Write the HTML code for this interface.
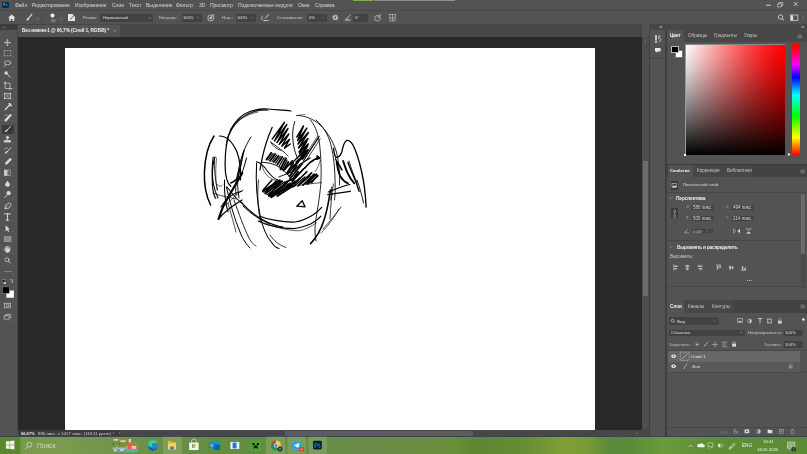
<!DOCTYPE html>
<html><head><meta charset="utf-8">
<style>
*{margin:0;padding:0;box-sizing:border-box}
html,body{width:807px;height:454px;overflow:hidden;background:#535353;font-family:"Liberation Sans",sans-serif;color:#ddd;position:relative}
.a{position:absolute}
.t{position:absolute;will-change:transform;white-space:nowrap;font-size:5px;line-height:6px;color:#d8d8d8}
svg{overflow:visible}
</style></head><body>
<!-- ===== MENU BAR ===== -->
<div class="a" style="left:0;top:0;width:807px;height:10px;background:#535353"></div>
<div class="a" style="left:353.4px;top:0;width:20.1px;height:1.2px;background:#7cb342"></div><div class="a" style="left:373.5px;top:0;width:81.5px;height:1.2px;background:#8e8e8e"></div>
<div class="a" style="left:2.1px;top:2.1px;width:6.7px;height:5.9px;background:#0b2a4a;border-radius:0.8px"></div>
<div class="t" style="left:3.2px;top:2.6px;font-size:3.6px;line-height:4.5px;color:#4cb0f0;font-weight:700">Ps</div>
<div class="t" style="left:15px;top:2px">Файл</div>
<div class="t" style="left:32px;top:2px">Редактирование</div>
<div class="t" style="left:74.6px;top:2px">Изображение</div>
<div class="t" style="left:112px;top:2px">Слои</div>
<div class="t" style="left:128.5px;top:2px">Текст</div>
<div class="t" style="left:146px;top:2px">Выделение</div>
<div class="t" style="left:176.4px;top:2px">Фильтр</div>
<div class="t" style="left:199px;top:2px">3D</div>
<div class="t" style="left:210.2px;top:2px">Просмотр</div>
<div class="t" style="left:238px;top:2px">Подключаемые модули</div>
<div class="t" style="left:298px;top:2px">Окно</div>
<div class="t" style="left:315.4px;top:2px">Справка</div>
<svg class="a" style="left:760px;top:0" width="47" height="10" viewBox="0 0 47 10">
 <path d="M6 5.2h5" stroke="#ddd" stroke-width="0.9"/>
 <path d="M17.5 3.8h4v3h-4z M18.8 3.8v-1.3h4v3h-1.2" stroke="#ccc" stroke-width="0.7" fill="none"/>
 <path d="M33.8 2.2l3.8 3.8M37.6 2.2l-3.8 3.8" stroke="#ddd" stroke-width="0.8"/>
</svg>
<div class="a" style="left:0;top:10px;width:807px;height:1px;background:#4a4a4a"></div>
<!-- ===== OPTIONS BAR ===== -->
<div class="a" style="left:0;top:11px;width:807px;height:13px;background:#535353"></div>
<svg class="a" style="left:0;top:11px" width="400" height="13" viewBox="0 0 400 13">
 <!-- home -->
 <path d="M8.2 6.8L11.7 3.4L15.3 6.8H14.2V10H12.6V8H10.8V10H9.3V6.8Z" fill="#e6e6e6"/>
 <path d="M21.8 1.5v10M41 1.5v10" stroke="#4a4a4a" stroke-width="0.6"/>
 <!-- brush -->
 <path d="M31.9 3.2L28.3 7.6" stroke="#e6e6e6" stroke-width="1.05" stroke-linecap="round"/>
 <path d="M28.6 7.1c-1.2 0.2-1.9 0.9-2.1 2.5c1.4-0.1 2.3-0.7 2.7-1.8z" fill="#e6e6e6"/>
 <path d="M36.4 7.3l1.1 0.8l1.1-0.8" stroke="#aaa" stroke-width="0.5" fill="none"/>
 <!-- brush dot + 30 -->
 <circle cx="52.5" cy="4.5" r="2" fill="#f2f2f2"/>
 <path d="M60 7.3l1.1 0.8l1.1-0.8" stroke="#aaa" stroke-width="0.5" fill="none"/>
 <!-- brush panel -->
 <path d="M68 3h4.5l2.5 2.5V10H68z" fill="#e4e4e4"/>
 <path d="M74.6 3.8L70.2 8.6" stroke="#3a3a3a" stroke-width="0.8"/>
 <!-- pressure opacity icon -->
 <circle cx="210.8" cy="7" r="3" stroke="#ccc" stroke-width="0.8" fill="none"/>
 <circle cx="210.8" cy="7" r="1.2" fill="#ccc"/>
 <path d="M214.3 3L210.8 6.8" stroke="#ddd" stroke-width="0.8"/>
 <!-- airbrush -->
 <path d="M262.5 9.2a3 3 0 0 1 0.5-4.5" stroke="#ccc" stroke-width="0.8" fill="none"/>
 <path d="M263.5 9.5h5M269 3.2L265 7.5" stroke="#ddd" stroke-width="0.8"/>
 <path d="M266 4.5l1 1" stroke="#ddd" stroke-width="0.6"/>
 <!-- gear -->
 <circle cx="335.3" cy="6.5" r="2.2" stroke="#e6e6e6" stroke-width="1.3" fill="none" stroke-dasharray="1 0.7"/>
 <circle cx="335.3" cy="6.5" r="1.5" stroke="#e6e6e6" stroke-width="0.7" fill="none"/>
 <circle cx="338.5" cy="9.8" r="0.4" fill="#ccc"/>
 <!-- angle -->
 <path d="M345 9.2h5.6M345 9.2L350.5 3.8M348 9.2a3 3 0 0 0-0.8-2" stroke="#ddd" stroke-width="0.7" fill="none"/>
 <!-- pressure size -->
 <circle cx="377.5" cy="7.2" r="2.8" stroke="#bbb" stroke-width="0.8" fill="none"/>
 <path d="M381 3.2L377.5 7" stroke="#ddd" stroke-width="0.8"/>
 <!-- symmetry -->
 <path d="M389 3.5h7M389.5 3.5l0.5 6.5h5l0.5-6.5M392.5 3.5v6.5M390 6.8h5" stroke="#bbb" stroke-width="0.7" fill="none"/>
</svg>
<div class="t" style="left:50.8px;top:18.3px;font-size:4px;line-height:5px;color:#bbb">30</div>
<div class="t" style="font-size:4.2px;left:83px;top:15px;color:#c8c8c8">Режим:</div>
<div class="a" style="left:100px;top:14.2px;width:53px;height:7.5px;background:#424242"></div>
<div class="t" style="font-size:4.15px;left:103px;top:15px;color:#e0e0e0">Нормальный</div>
<svg class="a" style="left:148px;top:16px" width="4" height="4"><path d="M0.8 1.5l1.2 1l1.2-1" stroke="#bbb" stroke-width="0.5" fill="none"/></svg>
<div class="t" style="font-size:4.2px;left:159px;top:15px;color:#c8c8c8">Непрозр.:</div>
<div class="a" style="left:181.5px;top:14.2px;width:14.5px;height:7.5px;background:#424242"></div>
<div class="a" style="left:196.3px;top:14.2px;width:5.7px;height:7.5px;background:#424242"></div>
<div class="t" style="font-size:4.0px;left:183px;top:15px;color:#e0e0e0">100%</div>
<div class="t" style="font-size:4.4px;left:222px;top:15px;color:#c8c8c8">Наж.:</div>
<div class="a" style="left:235.5px;top:14.2px;width:14.5px;height:7.5px;background:#424242"></div>
<div class="a" style="left:250.3px;top:14.2px;width:5.7px;height:7.5px;background:#424242"></div>
<div class="t" style="font-size:4.0px;left:237px;top:15px;color:#e0e0e0">100%</div>
<div class="t" style="font-size:4.1px;left:277.3px;top:15px;color:#c8c8c8">Сглаживание:</div>
<div class="a" style="left:307px;top:14.2px;width:14px;height:7.5px;background:#424242"></div>
<div class="a" style="left:321.3px;top:14.2px;width:5.7px;height:7.5px;background:#424242"></div>
<div class="t" style="font-size:4.2px;left:309px;top:15px;color:#e0e0e0">0%</div>
<div class="a" style="left:353px;top:14.2px;width:14.6px;height:7.5px;background:#424242"></div>
<div class="t" style="font-size:4.2px;left:355px;top:15px;color:#e0e0e0">0°</div>
<svg class="a" style="left:195px;top:14px" width="60" height="8"><path d="M2.3 3.5l0.9 0.7l0.9-0.7M56.3 3.5l0.9 0.7l0.9-0.7" stroke="#aaa" stroke-width="0.5" fill="none"/></svg>
<svg class="a" style="left:320px;top:14px" width="8" height="8"><path d="M2.3 3.5l0.9 0.7l0.9-0.7" stroke="#aaa" stroke-width="0.5" fill="none"/></svg>
<svg class="a" style="left:770px;top:11px" width="37" height="13" viewBox="0 0 37 13">
 <circle cx="10.6" cy="6" r="2.2" stroke="#e0e0e0" stroke-width="0.8" fill="none"/>
 <path d="M12.2 7.6l1.8 1.8" stroke="#e0e0e0" stroke-width="0.9"/>
 <rect x="20.6" y="4" width="7.2" height="5.6" stroke="#ddd" stroke-width="0.7" fill="none"/>
 <rect x="21" y="4.4" width="2.2" height="4.8" fill="#ddd"/>
 <path d="M32 6.5l0.9 0.7l0.9-0.7" stroke="#aaa" stroke-width="0.5" fill="none"/>
</svg>

<!-- ===== TOOLBAR ===== -->
<div class="a" style="left:0;top:24px;width:17px;height:6px;background:#3c3c3c"></div>
<svg class="a" style="left:2px;top:25.5px" width="4" height="3"><path d="M0.5 0.5l1 1l-1 1M2 0.5l1 1l-1 1" stroke="#bbb" stroke-width="0.4" fill="none"/></svg>
<div class="a" style="left:0;top:30px;width:17px;height:400px;background:#535353"></div>
<div class="a" style="left:17px;top:24px;width:1px;height:406px;background:#454545"></div>
<div class="a" style="left:1.7px;top:125px;width:12.6px;height:8.6px;background:#383838"></div>
<svg class="a" style="left:0;top:30px" width="17" height="300" viewBox="0 30 17 300"><defs><linearGradient id="gr" x1="0" x2="1"><stop offset="0" stop-color="#fff"/><stop offset="1" stop-color="#222"/></linearGradient></defs>
<g stroke="#d8d8d8" stroke-width="0.7" fill="none" stroke-linecap="round">
 <!-- move -->
 <path d="M7.4 39.6v6M4.4 42.6h6"/>
 <path d="M6.6 40.4l0.8-0.8l0.8 0.8M6.6 44.8l0.8 0.8l0.8-0.8M5.2 41.8l-0.8 0.8l0.8 0.8M9.6 41.8l0.8 0.8l-0.8 0.8" stroke-width="0.5"/>
 <!-- marquee -->
 <path d="M4.3 50.6h1.6M7 50.6h1.6M9.6 50.6h1.2M4.3 55.8h1.6M7 55.8h1.6M9.6 55.8h1.2M4.3 50.6v1.4M4.3 53v1.2M4.3 55v0.8M10.8 50.6v1.4M10.8 53v1.2M10.8 55v0.8" stroke-width="0.6" stroke-linecap="butt"/>
 <!-- lasso -->
 <ellipse cx="7.6" cy="62.8" rx="3.2" ry="2"/>
 <path d="M5.4 64.6l-0.6 1.8"/>
 <!-- quick select -->
 <path d="M4.6 71.5h3v3h-3z" fill="#d8d8d8" stroke="none"/>
 <path d="M7.2 74l3 3" stroke-width="1"/>
 <!-- crop -->
 <path d="M5.2 81.5v7h6.5M3.8 83.2h6.1v6.6"/>
 <!-- frame -->
 <rect x="4.3" y="93.3" width="6.4" height="5.4"/>
 <path d="M4.3 93.3l6.4 5.4M10.7 93.3l-6.4 5.4" stroke-width="0.5"/>
 <!-- eyedropper -->
 <path d="M10.3 104.3L5.5 109.3" stroke-width="1.3"/><path d="M9.2 103.6l2 2" stroke-width="1.5"/><path d="M5.5 109.3l-0.9 0.9" stroke-width="0.6"/>
 <!-- healing -->
 <path d="M10.4 115.2L5.6 120.4" stroke-width="2.4"/>
 <path d="M4.8 115.5a2 2 0 0 1 2.5-0.5" stroke-width="0.5"/>
 <!-- brush -->
 <path d="M10.6 126.2L7 130.3" stroke-width="0.9"/>
 <path d="M7 130c-1.2 0.2-1.8 0.8-2 1.8c1.2 0 1.8-0.5 2.2-1.2z" fill="#d8d8d8"/>
 <!-- stamp -->
 <circle cx="7.5" cy="137.5" r="1.2" fill="#d8d8d8"/>
 <path d="M7.5 138.5v1.5M4.5 140.5h6v1.6h-6z" fill="#d8d8d8"/>
 <!-- history brush -->
 <path d="M10.8 147.8L7 152" stroke-width="1"/><path d="M7 151.5c-1.1 0.2-1.7 0.8-1.9 1.8c1.1 0 1.7-0.5 2.1-1.2z" fill="#d8d8d8"/>
 <path d="M4 149.5a3 3 0 0 1 3.5-1.5" stroke-width="0.6"/>
 <!-- eraser -->
 <path d="M10.3 159.3L6.3 163.3" stroke-width="2.6"/>
 <!-- gradient -->
 <rect x="4.5" y="170" width="6.2" height="5.5" stroke-width="0.5" fill="url(#gr)"/>
 <!-- blur drop -->
 <path d="M7.5 180.8c-1.8 2.2-2.4 3.2-2.4 4c0 1.3 1.1 2 2.4 2s2.4-0.7 2.4-2c0-0.8-0.6-1.8-2.4-4z" fill="#d8d8d8" stroke="none"/>
 <!-- dodge -->
 <circle cx="8.6" cy="193.2" r="2.1" fill="#d8d8d8" stroke="none"/>
 <path d="M7.3 194.8L4.6 197.6" stroke-width="0.8"/>
 <!-- pen -->
 <path d="M5 208.5l1-3.8l3.5-2l1.6 1.6l-2 3.5z" stroke-width="0.8"/><path d="M5 208.5l2.3-2.3" stroke-width="0.5"/>
 <!-- type -->
 <path d="M4.6 213.9h5.8M7.5 213.9v6.3M6.2 220.2h2.6" stroke-width="1"/>
 <!-- path select -->
 <path d="M5.6 225.2v6.2l1.6-1.5l1.2 2.3l0.8-0.4l-1.2-2.2h2z" fill="#d8d8d8" stroke="none"/>
 <!-- rectangle -->
 <rect x="4.2" y="236.8" width="6.8" height="4.8" fill="#8a8a8a" stroke="#bbb" stroke-width="0.5"/>
 <!-- hand -->
 <path d="M5 249.5c0-1.2 0.5-2.2 1-2.6v1.8M6.4 246.5v2M7.6 246.2v2.2M8.8 246.5v2M10 247.2c0 2.2 0 4.5-2.4 5h-1.2c-1.2-0.5-1.8-1.6-2.2-2.6" stroke-width="0.7"/>
 <path d="M5 248.5h5v2.5l-1.5 1.4h-2z" fill="#d8d8d8" stroke="none"/>
 <!-- zoom -->
 <circle cx="7" cy="259.8" r="2" stroke-width="0.7"/>
 <path d="M8.4 261.3l1.8 1.8" stroke-width="0.9"/>
 <!-- more -->
 <circle cx="5.2" cy="271.5" r="0.55" fill="#d8d8d8" stroke="none"/>
 <circle cx="8" cy="271.5" r="0.55" fill="#d8d8d8" stroke="none"/>
 <circle cx="10.8" cy="271.5" r="0.55" fill="#d8d8d8" stroke="none"/>
 <!-- mini swatches + swap -->
 <rect x="2.3" y="279.8" width="2.6" height="2.6" fill="#111" stroke="#ccc" stroke-width="0.3"/>
 <path d="M3.8 282.2h2v1.8h-2z" fill="#ddd" stroke="none"/>
 <path d="M10.2 279.8h2.2v2.4" stroke-width="0.6"/>
 <path d="M13.4 282.5h-2" stroke-width="0.2"/>
 <!-- quick mask -->
 <rect x="4.3" y="303.2" width="6.4" height="4.6" stroke-width="0.6"/>
 <circle cx="7.5" cy="305.5" r="1.4" stroke-width="0.5"/>
 <!-- screen mode -->
 <path d="M4.2 316v3.2h5v-3.2z M5.8 316v-1.6h5v3.2h-1.5" stroke-width="0.6"/>
</g>
<rect x="6.2" y="290.4" width="7.8" height="7.5" fill="#fff" stroke="#777" stroke-width="0.3"/>
<rect x="2.6" y="286.9" width="6.7" height="6.4" fill="#000" stroke="#999" stroke-width="0.4"/>
<!-- tiny corner triangles -->
<g fill="#a8a8a8">
 <path d="M12.2 46.3h1v-1z M12.2 57h1v-1z M12.2 67.2h1v-1z M12.2 78h1v-1z M12.2 89h1v-1z M12.2 99.8h1v-1z M12.2 110.5h1v-1z M12.2 121.3h1v-1z M12.2 132.5h1v-1z M12.2 143.3h1v-1z M12.2 154.3h1v-1z M12.2 165.3h1v-1z M12.2 176.3h1v-1z M12.2 187.3h1v-1z M12.2 198.3h1v-1z M12.2 209.4h1v-1z M12.2 220.5h1v-1z M12.2 231.8h1v-1z M12.2 242.7h1v-1z M12.2 253.5h1v-1z M12.2 275h1v-1z M12.2 320.8h1v-1z"/>
</g>
</svg>

<!-- ===== TAB ROW ===== -->
<div class="a" style="left:18px;top:24px;width:624px;height:13px;background:#474747"></div>
<div class="a" style="left:18px;top:25px;width:102px;height:12px;background:#535353"></div>
<div class="t" style="left:21.6px;top:28px;font-size:4.8px;color:#f0f0f0;font-weight:700;letter-spacing:-0.12px">Без имени-1 @ 66,7% (Слой 1, RGB/8) *</div>
<svg class="a" style="left:113px;top:28.5px" width="4" height="4"><path d="M0.6 0.6l2.6 2.6M3.2 0.6l-2.6 2.6" stroke="#aaa" stroke-width="0.45"/></svg>
<!-- ===== CANVAS AREA ===== -->
<div class="a" style="left:18px;top:37px;width:624px;height:393px;background:#282828"></div>
<div class="a" style="left:65px;top:48px;width:530px;height:382px;background:#fff"></div>
<!-- v scrollbar -->
<div class="a" style="left:642px;top:37px;width:6.5px;height:393px;background:#4d4d4d"></div>
<div class="a" style="left:642.5px;top:160.5px;width:5.5px;height:135.5px;background:#6b6b6b"></div>
<svg class="a" style="left:642px;top:39px" width="7" height="4"><path d="M2.2 2.6l1.1-1l1.1 1" stroke="#999" stroke-width="0.45" fill="none"/></svg>
<svg class="a" style="left:642px;top:423.5px" width="7" height="4"><path d="M2.2 1.2l1.1 1l1.1-1" stroke="#999" stroke-width="0.45" fill="none"/></svg>
<!-- status bar -->
<div class="a" style="left:18px;top:430px;width:631px;height:6px;background:#474747"></div>
<div class="a" style="left:18px;top:430px;width:102px;height:6px;background:#3b3b3b"></div>
<div class="a" style="left:285px;top:430.5px;width:188px;height:5px;background:#5c5c5c"></div>
<div class="t" style="left:20.5px;top:430.5px;font-size:4px;line-height:5px;color:#e8e8e8;font-weight:700">66,67%</div>
<div class="t" style="left:38px;top:430.5px;font-size:4.36px;line-height:5px;color:#cfcfcf">890 пикс. x 1417 пикс. (118,11 ppcm)</div>
<svg class="a" style="left:111px;top:430px" width="12" height="6"><path d="M1.8 1.6l1.2 1.3l-1.2 1.3M9 1.9l-0.8 1l0.8 1" stroke="#bbb" stroke-width="0.45" fill="none"/></svg>
<svg class="a" style="left:634px;top:430px" width="6" height="6"><path d="M2.5 1.9l0.8 1l-0.8 1" stroke="#999" stroke-width="0.45" fill="none"/></svg>

<!-- ===== SKETCH ===== -->
<svg class="a" style="left:0;top:0" width="807" height="454" viewBox="0 0 807 454">
<g fill="none" stroke="#000" stroke-linecap="round" stroke-linejoin="round">
 <!-- top hair arc (multiple) -->
 <path d="M230.8 186.3C226.5 183 225.2 176 225.1 165C225 150 226 140 231 129C236 120 243 114 250 111.5C256 109.5 262 108.3 268 109C276 109.8 284 110.2 291 111" stroke-width="1.25"/>
 <path d="M226.1 145C227 138 229 133 233 127C238 120 244 115.5 251 112.5C256 110.5 261 109.5 267 109.8" stroke-width="0.8"/>
 <path d="M227.5 138C230 131 234 125 239 120C244 116 250 113 256 111.2C260 110.2 264 110 268 110.3" stroke-width="0.7"/>
 <path d="M229.5 134C232 128 236 123 241 119C246 115.5 252 113.2 258 112" stroke-width="0.6"/>
 <path d="M296.4 115.6C299 115 302 114.6 305 114.5" stroke-width="0.5"/>
 <path d="M224.5 180C224 196 226 205 228 212" stroke-width="1.07"/>
 <!-- left ear -->
 <path d="M214 136C208 145 205 158 204.4 172C204 185 206 196 210.6 205" stroke-width="1.50"/>
 <path d="M219.4 136C227 136 233 143 237 152C240 160 241 170 240.5 180" stroke-width="1.21"/>
 <path d="M213.2 157C211.8 166 212 176 213.4 184C214.5 190 216.5 195 218 198" stroke-width="1.07"/>
 <path d="M214.6 158C214 168 215 180 217.5 190" stroke-width="0.78"/>
 <path d="M251 137C245 146 240.5 158 238.5 170C237 180 237.5 190 239 198" stroke-width="0.93"/>
 <path d="M241 165C236 175 235 185 236 195" stroke-width="0.93"/>
 <path d="M213 193C220 196 228 197 236 199" stroke-width="0.71"/>
  <path d="M244 150.6C242.5 156 240.5 166 238.3 176.9C237 179.5 234 181.5 230.8 183" stroke-width="1.4"/>
 <path d="M246.5 158C244.5 166 242 174 238.5 180.5" stroke-width="1"/>
 <path d="M214.6 157.5C212.6 165 211.8 175 212.4 185C213 192 214 196 215.8 198.5" stroke-width="1.15"/>
 <path d="M214.6 157.5C215.8 155.5 217 157.5 216.2 162C215.5 170 215.5 180 217 190" stroke-width="0.6"/>
 <path d="M216.8 184C219 186.5 221 187 222.5 185" stroke-width="0.6"/>
 <path d="M226.1 205C231 200 237 194 243 190" stroke-width="0.6"/>
<!-- V shape left -->
 <path d="M242.3 173C236 184 229 195 223 207C221 212 219.5 216 218.5 219" stroke-width="2.08"/>
 <path d="M218.5 219C224 212 232 206 242 200" stroke-width="1.36"/>
 <path d="M221 207C226 198 234 193 242 191" stroke-width="1.07"/>
 <path d="M227 187C234 196 238 201 242 203" stroke-width="1.07"/>
 <!-- long hair lines down -->
 <path d="M226.4 187C230 202 234 218 240 232C243 240 247 245 250 248" stroke-width="1.00"/>
 <path d="M234 200C239 214 244 228 249 238C252 243 254 245 256 246" stroke-width="0.85"/>
 <path d="M228 203C231 214 234 224 236 232" stroke-width="0.71"/>
 <path d="M240.5 201.7C248 210 256 217 265 221C271 224 276 226 283 227" stroke-width="1.21"/>
 <path d="M243 206C251 214 260 220 270 224" stroke-width="0.85"/>
 <path d="M256.6 163C255.8 178 256.5 198 260 215C262 225 265 235 272 243C274 246 277 248 279 248.5" stroke-width="1.07"/>
 <path d="M258.5 180C257 195 258 210 260.5 222" stroke-width="0.78"/>
 <!-- jaw lines -->
 <path d="M260 216.2C265 218.5 270 219.8 275.8 220.3C282 221.5 289 222.2 295.2 222C302 221 308 218 312.9 215C316.5 212.5 319.5 210 321.7 207.4" stroke-width="1.2"/>
 <path d="M258.2 221.1C263 223.5 268 225.5 274.1 226.4C281 227.8 287 228.6 293.5 228.6C300 228 306 226 311.1 223.8C315 221.5 318.5 219 320.8 216.2" stroke-width="1.1"/>
 <path d="M265.3 222.9C271 225.5 278 228 284.7 229.1C290 230.3 295 230.8 298.8 230.8C305 230 311 226.5 316.4 222.9" stroke-width="0.6"/>
 <path d="M270 235C274 241 279 245 286 247.5" stroke-width="0.78"/>
 <!-- head left line & big outline -->
 <path d="M272.2 127.3C268 137 264.5 147 262.5 157C261 163 260.5 167 260 170" stroke-width="1.21"/>
 <path d="M256.4 161.7C260 162.5 264 166 267 170.5C271 176 274.5 179 278 180" stroke-width="1.07"/>
 <!-- right head outline -->
 <path d="M297 115.5C305 115.5 313 119 319 124C327 131 333 141 336.5 152C339 162 340 175 339.5 185" stroke-width="0.85"/>
 <path d="M310.6 120C316 127 318.5 135 319.8 146C320.8 156 321.5 168 321 180C320.5 192 318 206 315.5 222C314.5 230 315 236 316 241" stroke-width="0.85"/>
 <path d="M315.9 120C323 126 328 134 331 145C334 157 335 170 335.2 185C335.3 192 335 197 334.5 200" stroke-width="0.85"/>
 <!-- central strands -->
 <path d="M294.7 121.6C292.5 128 292 136 293.5 145C294.5 151 296 155 298 159" stroke-width="0.93"/>
 <path d="M319 137C313 146 308 153 303.5 161" stroke-width="1.07"/>
 <path d="M317.5 136.5C312 145 307 152 302.5 159.5" stroke-width="0.71"/>
 <!-- eye outline left -->
 <path d="M270.5 142C275 145 280 149 284 152C286 154 287 155 288 156" stroke-width="0.85"/>
 <path d="M270.8 142.5C273 146 276 149 281 150.5" stroke-width="0.78"/>
 <path d="M262 162.3C266 162.5 270 163 274 164.5C279 166.5 284 170 289 176" stroke-width="0.93"/>
 <!-- hatch block 1 -->
 <path d="M272.3 139L284.5 122.2L274.6 140.9L286.8 124.4L277 142.6L288 128.5L279.3 144.3L288.8 134L281.8 146.2L289.5 139.4L284.5 148.2L290.3 144" stroke-width="1.45"/>
 <!-- hatch block 2 -->
 <path d="M296.9 137L303.5 126L297.6 140.5L306.8 128.2L298 144L308.3 132.5L298.5 148L308 138.5L299.1 152L308.3 144L299.6 156L308 149.8L300.2 159.5L306.8 153" stroke-width="1.5"/>
 <!-- upper band -->
 <path d="M266.5 159.5L271.3 152.9M270.1 160.8L275 154.1M273.8 162L278.6 155.9M277.4 164.4L282.2 157.1M280.4 169.2L285.9 158.3M283.5 170.5L288.3 162M287.1 172.9L293.2 163.2M289.5 176.5L296.8 165.6M292 180.2L298 171.7" stroke-width="1.9"/>
 <path d="M268.3 160L273 153.6M272 161.5L276.8 155M275.6 163.2L280.4 156.5M279 166.5L284 157.8M282 170L287 160" stroke-width="1.2"/>
 <path d="M285 169.2L292.3 160.8M287.4 174.1L298.3 162M289.8 179L300.8 165.6M292.3 181.4L303.2 169.2M294.7 183.8L306.8 171.7M298.3 185L311.7 172.9M303.2 185L314.1 174.1M306.8 183.8L316.5 174.1M311.7 182.6L317.7 175.3" stroke-width="1.6"/>
 <path d="M290 165L299 156M292 168L302 158M296 162L305 154M299 165L310 158" stroke-width="1.4"/>
 <path d="M319.3 136.2L305.2 157.5M320.2 139L306.8 159.5" stroke-width="0.75"/>
 <path d="M319.4 157.6C316 158.5 313 160 310 162.5C308 164.5 306 166.5 304.5 168.2" stroke-width="1.7"/>
 <path d="M317.5 155.5L320 158.5L316.5 159.5Z" stroke-width="1" fill="#000"/>
 <path d="M299.5 154L306.5 141.5M301 157.5L307.5 146M302.5 159L308 150" stroke-width="1.6"/>
 <path d="M293 166.4L298.3 161.1M293 170.8L302.7 163.8M294.8 177L304.5 168.2" stroke-width="1.3"/>
 <path d="M320.3 160.3C319 164 318 168 315 171.7" stroke-width="0.55"/>
 <!-- lower band -->
 <path d="M262.8 191.1L279.8 180.2M265.3 193.5L282.2 181.4M268.9 195.9L287.1 182.6M271.3 197.1L291.9 183.8M277.4 195.9L294.4 185M285 182.6L292.3 179" stroke-width="1.95"/>
 <path d="M264 192.3L281 180.8M267 194.7L284.6 182M270 196.5L289.5 183.2" stroke-width="1.2"/>
 <path d="M267 189L276 183M282 190L292 186" stroke-width="1.2"/>
 <path d="M262 165C264 175 270 180 279 181" stroke-width="0.6"/>
 <path d="M287.4 187.4C300 185 311 183.5 321.4 182.6" stroke-width="0.7"/>
 <path d="M278.8 177L296.4 170" stroke-width="0.9"/>
  <path d="M263.5 189.4L272 180M266 192L276 181M269 195L281 182M273 196L286 183M278 194L291 183M283 191L295 181M288 188L300 178M293 187L305 177M298 186L310 176M303 185L315 175M308 184L318 176" stroke-width="1.45"/>
<!-- nose -->
 <path d="M296.8 206.2L302.2 200.8L305 206.8Z" stroke-width="1.35"/>
 <!-- right face thick line -->
 <path d="M330.4 190C329 200 327.5 210 324 220C321 230 316 238 310.6 243.6" stroke-width="1.58"/>
 <path d="M333.4 184C331.5 195 330.5 208 330 219" stroke-width="0.78"/>
 <path d="M341 207C336 214 330 221 323 229" stroke-width="0.71"/>
 <path d="M339 209C334 218 328 226 321 233" stroke-width="0.64"/>
 <path d="M327.8 194.6L350.3 191.3" stroke-width="1.36"/>
 <path d="M328.2 192C336 189 343 186 350 184.5" stroke-width="1.07"/>
 <path d="M331.7 187L330.8 200" stroke-width="0.78"/>
 <!-- right ear -->
 <path d="M333.5 148.2C334 152 334.5 156 336 157.5C338.5 157.5 340.5 155.5 341.8 152C342.8 147 344 142 346.5 140.5C348.5 140 350.5 141 353 145C356 151 359 160 361.5 171C364 182 365.5 193 366.1 207" stroke-width="1.35"/>
 <path d="M336.7 162.5C337.5 168 338.5 172 339.9 175.3C342 179.5 345 182 347.9 183.3" stroke-width="1.9"/>
 <path d="M343.1 160.9C344.5 165 346 170 347.9 173.7C349.5 177.5 351.5 180.5 354.3 183.3" stroke-width="1.8"/>
 <path d="M347.9 162.5C350 168 353 175 355.9 181.7C357 185 358 188 359.1 191.3" stroke-width="1.4"/>
 <path d="M335.5 159C337.5 163 340 166 342 170" stroke-width="1.5"/>
 <path d="M349 161C351 168 354 176 357 183" stroke-width="0.8"/>
 <path d="M357 180C360 188 362 196 363.5 203" stroke-width="0.9"/>
</g>
</svg>

<!-- ===== DOCK ===== -->
<div class="a" style="left:648.5px;top:24px;width:158.5px;height:412px;background:#3f3f3f"></div>
<div class="a" style="left:648.5px;top:24px;width:158.5px;height:6px;background:#474747"></div>
<svg class="a" style="left:659px;top:25px" width="5" height="4"><path d="M1 1v2M2.6 1v2" stroke="#ccc" stroke-width="0.7"/></svg>
<svg class="a" style="left:801px;top:25px" width="5" height="4"><path d="M1 1v2M2.6 1v2" stroke="#ccc" stroke-width="0.7"/></svg>
<!-- narrow column -->
<div class="a" style="left:650px;top:30px;width:15.2px;height:406px;background:#535353"></div>
<div class="a" style="left:650px;top:58px;width:15.2px;height:0.6px;background:#474747"></div>
<svg class="a" style="left:650px;top:30px" width="15" height="28" viewBox="0 0 15 28">
 <rect x="5.2" y="5" width="1.6" height="5.6" fill="#ddd"/>
 <rect x="5.2" y="11.2" width="1.6" height="1.6" fill="#eee"/>
 <path d="M11 6h-2.2l-0.2 2.4c1.4-0.3 2.2 0.5 2.2 1.5s-1 1.8-2.2 1.4" stroke="#ddd" stroke-width="0.7" fill="none"/>
 <path d="M5 18h5.6v3.6h-3.2l-1.3 1.2v-1.2h-1.1z" fill="#e8e8e8"/>
</svg>
<!-- main panel bg -->
<div class="a" style="left:667px;top:30px;width:140px;height:406px;background:#535353"></div>
<!-- COLOR PANEL -->
<div class="a" style="left:667px;top:30px;width:140px;height:12.2px;background:#474747"></div>
<div class="a" style="left:667px;top:30px;width:17px;height:12.2px;background:#535353"></div>
<div class="t" style="left:670px;top:33px;font-size:4.6px;color:#f4f4f4;font-weight:700">Цвет</div>
<div class="t" style="left:687.5px;top:33px;font-size:4.6px;color:#c4c4c4">Образцы</div>
<div class="t" style="left:713.7px;top:33px;font-size:4.6px;color:#c4c4c4">Градиенты</div>
<div class="t" style="left:743.7px;top:33px;font-size:4.6px;color:#c4c4c4">Узоры</div>
<svg class="a" style="left:797px;top:33.5px" width="6" height="5"><path d="M0.5 1h4.5M0.5 2.4h4.5M0.5 3.8h4.5" stroke="#aaa" stroke-width="0.5"/></svg>
<div class="a" style="left:675px;top:50px;width:7.5px;height:8px;background:#fff;border:0.4px solid #777"></div>
<div class="a" style="left:671px;top:46.2px;width:7.6px;height:6.8px;background:#000;border:0.5px solid #bbb"></div>
<div class="a" style="left:685.4px;top:44.4px;width:99.6px;height:110.6px;background:linear-gradient(to bottom,rgba(0,0,0,0.000) 0%,rgba(0,0,0,0.050) 10%,rgba(0,0,0,0.123) 20%,rgba(0,0,0,0.209) 30%,rgba(0,0,0,0.304) 40%,rgba(0,0,0,0.406) 50%,rgba(0,0,0,0.515) 60%,rgba(0,0,0,0.629) 70%,rgba(0,0,0,0.748) 80%,rgba(0,0,0,0.872) 90%,rgba(0,0,0,1.000) 100%),linear-gradient(to right,rgb(255,255,255) 0%,rgb(255,222,222) 10%,rgb(255,191,191) 20%,rgb(255,160,160) 30%,rgb(255,131,131) 40%,rgb(255,104,104) 50%,rgb(255,77,77) 60%,rgb(255,53,53) 70%,rgb(255,31,31) 80%,rgb(255,13,13) 90%,rgb(255,0,0) 100%);border-left:0.6px solid #9a9a9a;border-top:0.6px solid #8a8a8a"></div>
<div class="a" style="left:791.8px;top:44.4px;width:8.2px;height:110.6px;background:linear-gradient(to bottom,#f00 0%,#f02 5%,#f0f 18%,#00f 30%,#0ff 46%,#0f0 65%,#ff0 84%,#f00 100%)"></div>
<div class="a" style="left:684.4px;top:154px;width:2px;height:2px;border:0.5px solid #fff"></div>
<svg class="a" style="left:787px;top:152px" width="5" height="5"><path d="M1 1l2.6 1.5l-2.6 1.5z" fill="#eee"/></svg>
<!-- PROPERTIES PANEL -->
<div class="a" style="left:667px;top:164px;width:140px;height:1px;background:#3c3c3c"></div>
<div class="a" style="left:667px;top:165px;width:140px;height:11.8px;background:#424242"></div>
<div class="a" style="left:693px;top:165px;width:59px;height:11.8px;background:#474747"></div>
<div class="a" style="left:667.5px;top:165px;width:25.5px;height:11.8px;background:#535353"></div>
<div class="t" style="left:670px;top:167.6px;font-size:4.1px;color:#f4f4f4;font-weight:700">Свойства</div>
<div class="t" style="left:696.5px;top:167.6px;font-size:4.6px;color:#c4c4c4">Коррекция</div>
<div class="t" style="left:726.5px;top:167.6px;font-size:4.6px;color:#c4c4c4">Библиотеки</div>
<svg class="a" style="left:800px;top:169px" width="6" height="5"><path d="M0.5 1h4.5M0.5 2.4h4.5M0.5 3.8h4.5" stroke="#aaa" stroke-width="0.5"/></svg>
<div class="a" style="left:671.4px;top:180.5px;width:6.5px;height:9px;background:#3a3a3a"></div>
<svg class="a" style="left:671.4px;top:180.5px" width="7" height="9"><rect x="1" y="2.4" width="4.6" height="4" stroke="#ddd" stroke-width="0.5" fill="none"/><path d="M1.2 6.2l1.6-2l1 1l0.8-0.6l1 1.6z" fill="#ddd"/></svg>
<div class="t" style="left:682.5px;top:182.3px;font-size:4.3px;color:#dadada">Пиксельный слой</div>
<div class="a" style="left:667px;top:191.5px;width:140px;height:0.6px;background:#474747"></div>
<!-- perspective -->
<svg class="a" style="left:669px;top:195.5px" width="5" height="4"><path d="M0.6 1l1.6 1.6l1.6-1.6" stroke="#aaa" stroke-width="0.5" fill="none"/></svg>
<div class="t" style="left:676px;top:195.6px;font-size:4.8px;color:#f0f0f0;font-weight:700;letter-spacing:-0.1px">Перспектива</div>
<div class="a" style="left:670.7px;top:207.5px;width:7.3px;height:10.2px;background:#3b3b3b"></div>
<svg class="a" style="left:670.7px;top:207.5px" width="8" height="11"><path d="M3.65 2.2a1 1.2 0 1 0 0.01 0M3.65 7a1 1.2 0 1 0 0.01 0M3.65 4.6v1.8" stroke="#ddd" stroke-width="0.5" fill="none"/></svg>
<div class="a" style="left:691.8px;top:205.8px;width:21.2px;height:4.6px;background:#3e3e3e"></div>
<div class="a" style="left:731.8px;top:205.8px;width:21.1px;height:4.6px;background:#3e3e3e"></div>
<div class="a" style="left:691.8px;top:216px;width:21.2px;height:4.7px;background:#3e3e3e"></div>
<div class="a" style="left:731.8px;top:216px;width:21.1px;height:4.7px;background:#3e3e3e"></div>
<div class="a" style="left:691.8px;top:228.7px;width:14.7px;height:4.5px;background:#3e3e3e"></div>
<div class="a" style="left:708px;top:228.7px;width:5px;height:4.5px;background:#3e3e3e"></div>
<div class="t" style="left:685.5px;top:205.4px;font-size:3.6px;line-height:5px;color:#999">Ш</div>
<div class="t" style="left:726px;top:205.4px;font-size:3.6px;line-height:5px;color:#999">X</div>
<div class="t" style="left:686px;top:215.7px;font-size:3.6px;line-height:5px;color:#999">В</div>
<div class="t" style="left:726px;top:215.7px;font-size:3.6px;line-height:5px;color:#999">Y</div>
<div class="t" style="left:693px;top:205.4px;font-size:4.5px;line-height:5px;color:#d8d8d8">586 пикс.</div>
<div class="t" style="left:733px;top:205.4px;font-size:4.5px;line-height:5px;color:#d8d8d8">494 пикс.</div>
<div class="t" style="left:693px;top:215.8px;font-size:4.5px;line-height:5px;color:#d8d8d8">505 пикс.</div>
<div class="t" style="left:733px;top:215.8px;font-size:4.5px;line-height:5px;color:#d8d8d8">214 пикс.</div>
<div class="t" style="left:693px;top:228.5px;font-size:4.3px;line-height:5px;color:#d8d8d8">0,00°</div>
<svg class="a" style="left:683px;top:227px" width="70" height="8" viewBox="683 227 70 8">
 <path d="M684 233h5M684 233l4-4M686.5 233a2 2 0 0 0-0.6-1.5" stroke="#bbb" stroke-width="0.5" fill="none"/>
 <path d="M709.6 231h1.8" stroke="#aaa" stroke-width="0.45"/>
 <path d="M733.5 228.8l2.5 2.2l-2.5 2.2z" fill="none" stroke="#ccc" stroke-width="0.5"/>
 <path d="M740 228.8l-2.5 2.2l2.5 2.2z" fill="#ddd"/>
 <path d="M746 228.8h5.2l-2.6 2z" fill="none" stroke="#ccc" stroke-width="0.5"/>
 <path d="M746 233.4h5.2l-2.6-2z" fill="#ddd"/>
</svg>
<div class="a" style="left:667px;top:240px;width:134px;height:0.6px;background:#474747"></div>
<!-- align -->
<svg class="a" style="left:669px;top:245px" width="5" height="4"><path d="M0.6 1l1.6 1.6l1.6-1.6" stroke="#aaa" stroke-width="0.5" fill="none"/></svg>
<div class="t" style="left:676.8px;top:244.8px;font-size:4.6px;color:#f0f0f0;font-weight:700;letter-spacing:-0.14px">Выровнять и распределить</div>
<div class="t" style="left:670px;top:253.5px;font-size:4.5px;color:#c8c8c8;letter-spacing:-0.15px">Выровнить:</div>
<svg class="a" style="left:670px;top:263px" width="80" height="20" viewBox="670 263 80 20">
 <g fill="#bdbdbd">
  <rect x="673.2" y="264.5" width="0.6" height="6"/><rect x="674.2" y="265.4" width="3.5" height="1.6"/><rect x="674.2" y="268" width="2.5" height="1.6"/>
  <rect x="687" y="264.5" width="0.6" height="6"/><rect x="685.3" y="265.4" width="4" height="1.6"/><rect x="685.8" y="268" width="3" height="1.6"/>
  <rect x="701.6" y="264.5" width="0.6" height="6"/><rect x="697.8" y="265.4" width="3.5" height="1.6"/><rect x="698.8" y="268" width="2.5" height="1.6"/>
  <rect x="716" y="264.6" width="5" height="0.6"/><rect x="716.8" y="265.4" width="1.6" height="4"/><rect x="719.3" y="265.4" width="1.6" height="2.5"/>
  <rect x="728.6" y="267.4" width="5" height="0.6"/><rect x="729.4" y="265.6" width="1.6" height="4"/><rect x="731.9" y="266.3" width="1.6" height="2.5"/>
  <rect x="741" y="270.3" width="5" height="0.6"/><rect x="741.8" y="266.2" width="1.6" height="4"/><rect x="744.3" y="267.7" width="1.6" height="2.5"/>
 </g>
 <circle cx="747.6" cy="280.5" r="0.5" fill="#ddd"/><circle cx="749.4" cy="280.5" r="0.5" fill="#ddd"/><circle cx="751.2" cy="280.5" r="0.5" fill="#ddd"/>
</svg>
<div class="a" style="left:667px;top:286px;width:134px;height:0.6px;background:#474747"></div>
<!-- props scrollbar -->
<div class="a" style="left:801px;top:192px;width:4.7px;height:96px;background:#4a4a4a"></div>
<div class="a" style="left:801.3px;top:194px;width:4.1px;height:60px;background:#6a6a6a"></div>
<svg class="a" style="left:801px;top:283px" width="5" height="4"><path d="M1.2 1.2l1.2 1l1.2-1" stroke="#888" stroke-width="0.4" fill="none"/></svg>
<!-- LAYERS PANEL -->
<div class="a" style="left:667px;top:299.6px;width:140px;height:0.8px;background:#3c3c3c"></div>
<div class="a" style="left:667px;top:300.3px;width:140px;height:12.6px;background:#424242"></div>
<div class="a" style="left:684px;top:300.3px;width:49.8px;height:12.6px;background:#474747"></div>
<div class="a" style="left:667px;top:300.3px;width:17px;height:12.6px;background:#535353"></div>
<div class="t" style="left:670px;top:303.6px;font-size:4.6px;color:#f4f4f4;font-weight:700">Слои</div>
<div class="t" style="left:687.7px;top:303.6px;font-size:4.6px;color:#c4c4c4">Каналы</div>
<div class="t" style="left:711.5px;top:303.6px;font-size:4.6px;color:#c4c4c4">Контуры</div>
<svg class="a" style="left:800px;top:304px" width="6" height="5"><path d="M0.5 1h4.5M0.5 2.4h4.5M0.5 3.8h4.5" stroke="#aaa" stroke-width="0.5"/></svg>
<!-- filter row -->
<div class="a" style="left:668.8px;top:317.4px;width:50.2px;height:7.8px;background:#424242"></div>
<svg class="a" style="left:669px;top:317px" width="50" height="8"><circle cx="3.6" cy="3.6" r="1.4" stroke="#ddd" stroke-width="0.6" fill="none"/><path d="M4.6 4.6l1.2 1.2" stroke="#ddd" stroke-width="0.6"/><path d="M44.5 3.6l1 0.8l1-0.8" stroke="#aaa" stroke-width="0.45" fill="none"/></svg>
<div class="t" style="left:677px;top:318.6px;font-size:4.4px;color:#ddd">Вид</div>
<svg class="a" style="left:735px;top:316px" width="72" height="10" viewBox="735 316 72 10">
 <rect x="737.6" y="318.6" width="4.8" height="4" stroke="#ccc" stroke-width="0.5" fill="none"/><path d="M738 322.3l1.5-1.6l1 0.9l1.2-1.2v1.9z" fill="#ccc"/>
 <circle cx="749.6" cy="321" r="2" stroke="#ccc" stroke-width="0.5" fill="none"/><path d="M749.6 319a2 2 0 0 1 0 4z" fill="#ccc"/>
 <path d="M757.8 318.6h4.4M760 318.6v4.8" stroke="#ddd" stroke-width="0.8"/>
 <rect x="767.6" y="319" width="4" height="4" stroke="#ccc" stroke-width="0.5" fill="none"/><path d="M767 319.4h5.2M767 322.6h5.2M768 318.4v5.2M771.2 318.4v5.2" stroke="#ccc" stroke-width="0.35"/>
 <rect x="778" y="320.6" width="3.8" height="3" fill="#ccc"/><path d="M778.8 320.6v-1a1.1 1.1 0 0 1 2.2 0" stroke="#ccc" stroke-width="0.5" fill="none"/>
 <circle cx="803.4" cy="319.5" r="1.3" fill="#eee"/><path d="M802.6 322.2l0.8 0.8l0.8-0.8" stroke="#999" stroke-width="0.4" fill="none"/>
</svg>
<!-- blend row -->
<div class="a" style="left:668.8px;top:329.6px;width:75.9px;height:6.6px;background:#424242"></div>
<div class="t" style="left:671px;top:330.3px;font-size:4.4px;color:#ddd">Обычные</div>
<svg class="a" style="left:739px;top:330px" width="5" height="5"><path d="M1 2l1.2 1l1.2-1" stroke="#aaa" stroke-width="0.45" fill="none"/></svg>
<div class="t" style="left:748px;top:330.3px;font-size:4.4px;color:#c8c8c8">Непрозрачность:</div>
<div class="a" style="left:784px;top:329.6px;width:13.5px;height:6.6px;background:#424242"></div>
<div class="a" style="left:798px;top:329.6px;width:5px;height:6.6px;background:#424242"></div>
<div class="t" style="left:785px;top:330.3px;font-size:4.2px;color:#ddd">100%</div>
<!-- lock row -->
<div class="t" style="left:669px;top:341.8px;font-size:4.3px;color:#bdbdbd">Закрепить:</div>
<svg class="a" style="left:692px;top:340px" width="46" height="9" viewBox="692 340 46 9">
 <circle cx="697" cy="344.4" r="1.9" stroke="#ccc" stroke-width="0.5" fill="none" stroke-dasharray="0.6 0.5"/><circle cx="697" cy="344.4" r="0.9" fill="#ccc"/>
 <path d="M708 341.8l-3 3.5" stroke="#ddd" stroke-width="0.7"/><path d="M705 345c-0.6 0.2-1 0.6-1 1.3c0.7 0 1.1-0.3 1.3-0.9z" fill="#ddd"/>
 <path d="M715 341.4v6M712 344.4h6" stroke="#ddd" stroke-width="0.5"/>
 <path d="M722.4 342.2h4.8M723 342.2v4.6h4.4M725 343.4v3" stroke="#ccc" stroke-width="0.5" fill="none"/>
 <rect x="732.2" y="343.6" width="3.8" height="3" fill="#ddd"/><path d="M733 343.6v-1a1.1 1.1 0 0 1 2.2 0v1" stroke="#ddd" stroke-width="0.5" fill="none"/>
</svg>
<div class="t" style="left:764px;top:341.8px;font-size:4.3px;color:#bdbdbd">Заливка:</div>
<div class="a" style="left:784px;top:341.2px;width:13.5px;height:6.6px;background:#424242"></div>
<div class="a" style="left:798px;top:341.2px;width:5px;height:6.6px;background:#424242"></div>
<div class="t" style="left:785px;top:341.9px;font-size:4.2px;color:#ddd">100%</div>
<!-- layer rows -->
<div class="a" style="left:667px;top:350px;width:140px;height:0.6px;background:#474747"></div>
<div class="a" style="left:668px;top:351px;width:132px;height:10.5px;background:#676767"></div>
<div class="a" style="left:668px;top:361.5px;width:132px;height:10px;background:#595959"></div>
<div class="a" style="left:667px;top:371.5px;width:140px;height:0.6px;background:#4a4a4a"></div>
<svg class="a" style="left:668px;top:350px" width="132" height="22" viewBox="668 350 132 22">
 <path d="M670.9 356.2c1-1.4 2-1.8 2.7-1.8s1.7 0.4 2.7 1.8c-1 1.4-2 1.8-2.7 1.8s-1.7-0.4-2.7-1.8z" fill="#e8e8e8"/><circle cx="673.6" cy="356.2" r="0.8" fill="#555"/>
 <path d="M670.9 366.3c1-1.4 2-1.8 2.7-1.8s1.7 0.4 2.7 1.8c-1 1.4-2 1.8-2.7 1.8s-1.7-0.4-2.7-1.8z" fill="#e8e8e8"/><circle cx="673.6" cy="366.3" r="0.8" fill="#555"/>
 <rect x="680.3" y="352.2" width="8.8" height="8.2" stroke="#ddd" stroke-width="0.5" fill="none" stroke-dasharray="1.6 1"/>
 <path d="M687.5 353.8L682 359" stroke="#eee" stroke-width="0.5"/>
 <path d="M687 363.4L683.4 369" stroke="#ddd" stroke-width="0.6"/>
 <rect x="788.8" y="365.2" width="3.8" height="3.2" fill="#8a8a8a"/><path d="M789.6 365.2v-1a1.1 1.1 0 0 1 2.2 0v1" stroke="#8a8a8a" stroke-width="0.5" fill="none"/>
</svg>
<div class="t" style="left:691px;top:353.5px;font-size:4.4px;color:#eee">Слой 1</div>
<div class="t" style="left:692px;top:364px;font-size:4.4px;color:#e6e6e6">Фон</div>
<!-- footer -->
<div class="a" style="left:667px;top:426.8px;width:140px;height:0.6px;background:#474747"></div>
<svg class="a" style="left:718px;top:427px" width="80" height="9" viewBox="718 427 80 9">
 <g stroke="#bbb" stroke-width="0.5" fill="none">
  <path d="M722.4 431.5a1.2 1 0 1 0 0.01 0M726.4 431.5a1.2 1 0 1 0 0.01 0" stroke="#888"/>
  <path d="M734.5 434v-4a1 1 0 0 1 1.4-0.8M733.6 431.2h2M735.8 431l2 2.6M737.8 431l-2 2.6"/>
  <rect x="744.6" y="429.4" width="4.6" height="3.8" fill="#ddd" stroke="none"/><circle cx="746.9" cy="431.3" r="0.9" fill="#535353" stroke="none"/>
  <circle cx="758.4" cy="431.4" r="1.9"/><path d="M758.4 429.5a1.9 1.9 0 0 1 0 3.8z" fill="#ccc"/>
  <path d="M767.6 429.6h1.6l0.5 0.5h2.6v3.2h-4.7z" fill="#ddd" stroke="none"/>
  <rect x="779.2" y="429.2" width="4.2" height="4.2"/><path d="M781.3 430.2v2.2M780.2 431.3h2.2"/>
  <path d="M790.6 430h3.6M791 430.6v3h2.8v-3M791.8 429.4h1.2"/>
 </g>
</svg>

<!-- ===== TASKBAR ===== -->
<div class="a" style="left:0;top:436px;width:807px;height:18px;background:linear-gradient(90deg,#5a872e 0px,#5a872e 20px,#789a4c 21px,#7a9b4e 60px,#72964a 110px,#6a9044 160px,#628c3e 230px,#668c44 330px,#6a8a48 370px,#6a8c40 420px,#688e38 455px,#5c8632 480px,#678e34 525px,#80a034 565px,#7a9c36 585px,#5a8a3a 610px,#5c8c3a 630px,#6a9a3a 665px,#5f8e36 710px,#5d8c36 807px)"></div>
<div class="a" style="left:0;top:436px;width:807px;height:0.7px;background:#3d4248"></div>
<svg class="a" style="left:0;top:436px" width="807" height="18" viewBox="0 436 807 18">
 <!-- windows logo -->
 <g fill="#f4f6ee"><path d="M5.9 441.6l3.7-0.5v3.6h-3.7z"/><path d="M10.1 441l4.3-0.6v4.3h-4.3z"/><path d="M5.9 445.3h3.7v3.6l-3.7-0.5z"/><path d="M10.1 445.3h4.3v4.3l-4.3-0.6z"/></g>
 <!-- search -->
 <circle cx="29.3" cy="444.7" r="2.4" stroke="#dfe8d0" stroke-width="0.7" fill="none"/>
 <path d="M27.6 446.5l-2.2 2.4" stroke="#dfe8d0" stroke-width="0.8"/>
 <!-- widget illustration -->
 <path d="M112.9 448.2c4-0.6 9-0.5 13-0.2s8 0 11.8-0.3v4.2c-4 0.4-9 0.4-13 0.2s-8.5 0-11.8-0.3z" fill="#58aec4"/>
 <path d="M112.5 447.6h15v1.2h-15z" fill="#a8dccc" opacity="0.8"/>
 <path d="M114 449.5h3v1.4h-3zM120 449.2h4v1.6h-4z" fill="#dfe6f0" opacity="0.8"/>
 <path d="M117.5 450h1.5v1.2h-1.5zM124 450.2h1.5v1h-1.5z" fill="#7060a0" opacity="0.7"/>
 <ellipse cx="115.9" cy="439.8" rx="2.6" ry="1.1" fill="#f2c48a"/>
 <ellipse cx="123.1" cy="441.1" rx="3.3" ry="1.2" fill="#f7b862"/>
 <rect x="112.8" y="442.8" width="1.2" height="2" fill="#6a4a5a"/>
 <rect x="119.2" y="443" width="1.1" height="1.8" fill="#6a4a5a"/>
 <rect x="115.9" y="446" width="2" height="4" rx="0.8" fill="#e89a40"/>
 <rect x="125.8" y="445.8" width="2" height="3.8" rx="0.8" fill="#e89a40"/>
 <rect x="127.8" y="442.4" width="10.4" height="7" fill="#d86848"/>
 <rect x="131.7" y="445.9" width="4.5" height="3" fill="#f0c4b4"/>
 <ellipse cx="135.7" cy="443.2" rx="2.2" ry="1.7" fill="#4caa58"/>
 <rect x="128.8" y="439" width="1.9" height="3.4" fill="#dfe8cc"/>
 <!-- highlights -->
 <rect x="163" y="436.6" width="19.3" height="17.4" fill="rgba(200,220,170,0.22)"/>
 <rect x="266" y="436.6" width="19.4" height="17.4" fill="rgba(200,220,170,0.22)"/>
 <rect x="287.2" y="436.6" width="19" height="17.4" fill="rgba(200,220,170,0.22)"/>
 <rect x="308.5" y="436.6" width="18.5" height="17.4" fill="rgba(200,220,170,0.22)"/>
 <!-- edge -->
 <circle cx="152.6" cy="445.5" r="5" fill="#1a8ad8"/>
 <path d="M148 443.5a5 5 0 0 1 9.6 0.8c-1.5-1.5-4.5-1.8-5.8 0.2c-0.6 1 0.3 2.4 1.8 2.6c-2.6 0.5-5.2-0.5-5.6-3.6z" fill="#3fd08a"/>
 <path d="M150.4 446.5c0.4 1.6 2.4 2.6 4.4 2.2c1.2-0.2 2.3-0.8 2.8-1.6a5 5 0 0 1-9.4 0.5c0.6 0.3 1.5 0.2 2.2-1.1z" fill="#0d5fb0"/>
 <!-- folder -->
 <path d="M168 441h3l1 1h4v7.5h-8z" fill="#f0b429"/>
 <path d="M168 443.5h8v6h-8z" fill="#ffd35a"/>
 <path d="M170.2 446.5h3.6v3h-3.6z" fill="#2e7bd6"/>
 <!-- store -->
 <path d="M189.2 442.5h9.4v7.5h-9.4z" fill="#f6f6f6"/>
 <path d="M191.5 442.5v-1.2a2.4 2.4 0 0 1 4.8 0v1.2" stroke="#f0f0f0" stroke-width="0.6" fill="none"/>
 <rect x="192" y="444.3" width="1.6" height="1.6" fill="#f25022"/><rect x="194" y="444.3" width="1.6" height="1.6" fill="#7fba00"/>
 <rect x="192" y="446.3" width="1.6" height="1.6" fill="#00a4ef"/><rect x="194" y="446.3" width="1.6" height="1.6" fill="#ffb900"/>
 <!-- outlook -->
 <path d="M212 441h7.5v9h-7.5z" fill="#1490df"/>
 <path d="M214 444.5h6v5.5h-6z" fill="#0a64ad"/>
 <rect x="209" y="442.6" width="5.5" height="5.5" fill="#0f78d4"/>
 <circle cx="211.75" cy="445.35" r="1.3" stroke="#fff" stroke-width="0.6" fill="none"/>
 <!-- whiteboard/app -->
 <rect x="230.4" y="442" width="8.9" height="7" fill="#f2f4f6"/>
 <rect x="232.6" y="442.6" width="4" height="5.8" fill="#1f7ae0"/>
 <!-- minecraft -->
 <rect x="250.5" y="440.6" width="10.4" height="9.6" fill="#4ea82f"/>
 <rect x="252.4" y="443" width="2.2" height="2.2" fill="#111"/><rect x="256.8" y="443" width="2.2" height="2.2" fill="#111"/>
 <path d="M254.6 445.2h2.2v1h1v2.6h-1v-1h-2.2v1h-1v-2.6h1z" fill="#111"/>
 <!-- chrome -->
 <circle cx="276" cy="445.4" r="5" fill="#db4437"/>
 <path d="M276 445.4L271.7 447.9A5 5 0 0 1 273.5 441.1z" fill="#db4437"/>
 <path d="M276 445.4L278.5 449.7A5 5 0 0 1 271.7 447.9L273.5 441.1z" fill="#0f9d58"/>
 <path d="M276 445.4L281 445.4A5 5 0 0 1 278.5 449.7z" fill="#ffcd40"/>
 <path d="M276 440.4a5 5 0 0 1 5 5h-5z" fill="#ffcd40"/>
 <circle cx="276" cy="445.4" r="2.1" fill="#fff"/><circle cx="276" cy="445.4" r="1.6" fill="#4285f4"/>
 <circle cx="280" cy="449" r="2.5" fill="#263238"/><circle cx="280" cy="449" r="1.1" fill="#7a8a7a"/>
 <!-- telegram -->
 <circle cx="296.6" cy="445.5" r="5" fill="#2aa3e3"/>
 <path d="M293.8 445.3l5.6-2.3l-1 5l-1.6-1.2l-0.8 0.8v-1.4l2-1.8l-2.6 1.6z" fill="#fff"/>
 <rect x="298.8" y="447.2" width="5.4" height="4" rx="0.6" fill="#e53935"/>
 <path d="M300 449.2h3" stroke="#fff" stroke-width="0.5"/>
 <!-- photoshop -->
 <rect x="313" y="440.8" width="8.8" height="8.6" rx="1.4" fill="#001e36"/>
 <path d="M314.8 448v-4.6h1.6a1.1 1.1 0 0 1 0 2.6h-1.6M320.2 444.4c-0.4-0.4-1.8-0.6-1.8 0.4c0 0.9 1.9 0.7 1.9 1.8c0 1-1.6 0.9-2 0.5" stroke="#31a8ff" stroke-width="0.6" fill="none"/>
 <!-- tray -->
 <path d="M688.6 446.8l1.9-1.9l1.9 1.9" stroke="#f2f4ee" stroke-width="0.65" fill="none"/>
 <path d="M698 447.2h5.5a1.3 1.3 0 0 0 0-2.6a1.9 1.9 0 0 0-3.5-0.4a1.4 1.4 0 0 0-2 3z" fill="#f2f4ee"/>
 <path d="M707.8 443h5v3.6h-5z" stroke="#eef2e8" stroke-width="0.5" fill="none"/><path d="M709 447.6v1.6M711 447.6h1.6" stroke="#eef2e8" stroke-width="0.5"/>
 <path d="M718 444.2h1l1.3-1.2v5l-1.3-1.2h-1z" fill="#f2f4ee"/><path d="M721.2 444.2a2 2 0 0 1 0 2.6M722.2 443.6a3 3 0 0 1 0 3.8" stroke="#eef2e8" stroke-width="0.4" fill="none"/>
 <path d="M729.5 448.5l2-2.5M731.8 445.5a1.2 1.2 0 1 0 0.01 0M734 443.4a1 1 0 1 0 0.01 0M730 447.5a1 1 0 1 0 0.01 0" stroke="#eef2e8" stroke-width="0.5" fill="none"/>
 <!-- notification -->
 <path d="M787.5 442.2h7.2v5.8h-4l-1.8 1.5v-1.5h-1.4z" fill="rgba(255,255,255,0.15)" stroke="#f2f4ee" stroke-width="0.6"/>
 <path d="M788.8 444h4.6M788.8 445.3h4.6M788.8 446.6h3" stroke="#e8ecdf" stroke-width="0.45"/>
 <circle cx="793.6" cy="449.2" r="2.3" fill="#2b352b"/>
 <path d="M793.6 448.1v2.2" stroke="#ddd" stroke-width="0.4"/>
</svg>
<div class="t" style="left:37px;top:442.6px;font-size:6.6px;color:#d2dcc4">Поиск</div>
<div class="t" style="left:741.6px;top:442.6px;font-size:4.6px;color:#f2f4ee">ENG</div>
<div class="t" style="left:763px;top:439.2px;font-size:4.3px;color:#f2f4ee">10:41</div>
<div class="t" style="left:757.4px;top:446.8px;font-size:4.3px;color:#f2f4ee">18.05.2025</div>

</body></html>
